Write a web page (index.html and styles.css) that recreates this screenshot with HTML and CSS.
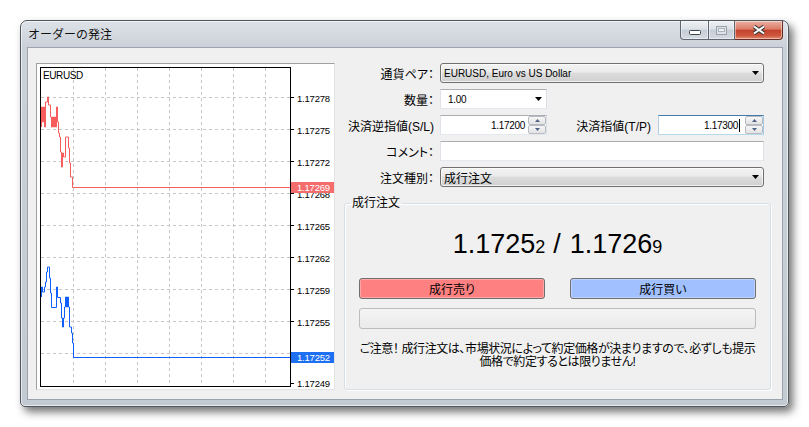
FILE: index.html
```html
<!DOCTYPE html>
<html lang="ja">
<head>
<meta charset="utf-8">
<title>オーダーの発注</title>
<link rel="stylesheet" href="styles.css">
</head>
<body>
<div class="window">
  <div class="titlebar">
    <div class="title">オーダーの発注</div>
    <div class="caption-buttons">
      <div class="cbtn min"><svg width="12" height="5" viewBox="0 0 12 5"><rect x="0.5" y="0.5" width="11" height="4" rx="1" fill="#fff" stroke="#3b4450"/></svg></div>
      <div class="cbtn max"><svg width="11" height="9" viewBox="0 0 11 9"><rect x="0.5" y="0.5" width="10" height="8" fill="#dfe3e8" stroke="#98a1ab"/><rect x="2.5" y="2.5" width="6" height="3" fill="#eef1f4" stroke="#a9b1ba"/></svg></div>
      <div class="cbtn close"><svg width="14" height="10" viewBox="0 0 14 10"><path d="M2 1.5L12 8.5M12 1.5L2 8.5" stroke="#3a3a3a" stroke-width="4"/><path d="M2 1.5L12 8.5M12 1.5L2 8.5" stroke="#fff" stroke-width="2"/></svg></div>
    </div>
  </div>
  <div class="client">
    <div class="chart">
      <svg class="chart-svg" width="297" height="325" viewBox="37 64 297 325">
        <g class="grid">
          <path d="M73.5 68V387M105.5 68V387M137.5 68V387M169.5 68V387M201.5 68V387M233.5 68V387M265.5 68V387"/>
          <path d="M41 97.5H290M41 129.5H290M41 161.5H290M41 193.5H290M41 225.5H290M41 257.5H290M41 289.5H290M41 321.5H290M41 353.5H290"/>
        </g>
        <path class="ticks" d="M290 97.5H294M290 129.5H294M290 161.5H294M290 193.5H294M290 225.5H294M290 257.5H294M290 289.5H294M290 321.5H294M290 353.5H294M290 383.5H294"/>
        <rect x="40.5" y="67.5" width="250" height="319" fill="none" stroke="#000"/>
        <text class="sym" x="43" y="78.5">EURUSD</text>
        <g class="axis">
          <text x="297" y="101.5">1.17278</text>
          <text x="297" y="133.5">1.17275</text>
          <text x="297" y="165.5">1.17272</text>
          <text x="297" y="197.5">1.17268</text>
          <text x="297" y="229.5">1.17265</text>
          <text x="297" y="261.5">1.17262</text>
          <text x="297" y="293.5">1.17259</text>
          <text x="297" y="325.5">1.17255</text>
          <text x="297" y="357.5">1.17252</text>
          <text x="297" y="386.5">1.17249</text>
        </g>
        <path class="ask" d="M41.5 127V107H42.5V122H43.5V107H44.5V127H45.5V102H47.5V97H48.5V105H50.5V117H51.5V127H52.5V117H53.5V127H54.5V117H55.5V127H56.5V107H57.5V122H58.5V133H59.5V137H60.5V152H61.5V167H62.5V153H63.5V157H65.5V137H68.5V148H69.5V163H70.5V177H72.5V187.5H290"/>
        <path class="bid" d="M41.5 297V287H42.5V292H44.5V287H45.5V282H46.5V272H47.5V267H49.5V278H50.5V293H51.5V307.5H56.5V287H57.5V297.5H60.5V303H61.5V318H62.5V327H63.5V318H64.5V307H65.5V297H66.5V307H67.5V297H68.5V307H69.5V327H71.5V333H72.5V343H73.5V357.5H290"/>
        <rect class="ask-tag" x="291" y="182" width="43" height="11"/>
        <text class="tag-text" x="297" y="191">1.17269</text>
        <rect class="bid-tag" x="291" y="352" width="43" height="11"/>
        <text class="tag-text" x="297" y="361">1.17252</text>
      </svg>
    </div>
    <div class="form">
      <div class="row">
        <div class="label">通貨ペア：</div>
        <div class="combo wide"><span class="ftext">EURUSD, Euro vs US Dollar</span><svg class="arrow" width="7" height="4" viewBox="0 0 7 4"><path d="M0 0H7L3.5 4z"/></svg></div>
      </div>
      <div class="row">
        <div class="label">数量：</div>
        <div class="dropedit"><span class="ftext num">1.00</span><svg class="arrow" width="7" height="4" viewBox="0 0 7 4"><path d="M0 0H7L3.5 4z"/></svg></div>
      </div>
      <div class="row">
        <div class="label">決済逆指値(S/L)</div>
        <div class="spin">
          <span class="ftext num value">1.17200</span>
          <div class="spin-btns">
            <div class="sb"><svg width="5" height="3" viewBox="0 0 5 3"><path d="M0 3H5L2.5 0z"/></svg></div>
            <div class="sb"><svg width="5" height="3" viewBox="0 0 5 3"><path d="M0 0H5L2.5 3z"/></svg></div>
          </div>
        </div>
        <div class="label2">決済指値(T/P)</div>
        <div class="spin focus">
          <span class="ftext num value">1.17300<span class="caret"></span></span>
          <div class="spin-btns">
            <div class="sb"><svg width="5" height="3" viewBox="0 0 5 3"><path d="M0 3H5L2.5 0z"/></svg></div>
            <div class="sb"><svg width="5" height="3" viewBox="0 0 5 3"><path d="M0 0H5L2.5 3z"/></svg></div>
          </div>
        </div>
      </div>
      <div class="row">
        <div class="label">コメント：</div>
        <div class="edit wide"></div>
      </div>
      <div class="row">
        <div class="label">注文種別：</div>
        <div class="combo wide"><span class="jp">成行注文</span><svg class="arrow" width="7" height="4" viewBox="0 0 7 4"><path d="M0 0H7L3.5 4z"/></svg></div>
      </div>
      <fieldset class="group">
        <legend>成行注文</legend>
        <div class="price">1.1725<span class="small">2</span><span class="slash">/</span>1.1726<span class="small">9</span></div>
        <div class="buttons">
          <div class="btn sell">成行売り</div>
          <div class="btn buy">成行買い</div>
        </div>
        <div class="progress"></div>
        <p class="notice">ご注意！ 成行注文は、市場状況によって約定価格が決まりますので、必ずしも提示<br>価格で約定するとは限りません!</p>
      </fieldset>
    </div>
  </div>
</div>
</body>
</html>
```
FILE: styles.css
```css
* { box-sizing: border-box; }
html, body { margin: 0; padding: 0; }
body {
  background: #fff;
  width: 809px;
  height: 427px;
  overflow: hidden;
  font-family: "Liberation Sans", "Noto Sans CJK JP", sans-serif;
  font-size: 12px;
  color: #000;
}

.window {
  margin: 20px 0 0 20px;
  width: 769px;
  height: 387px;
  border: 1px solid #4f5760;
  border-radius: 7px 7px 5px 5px;
  background: linear-gradient(#dde2e8, #cbd1d8 26px, #c3cad2);
  box-shadow: 4px 5px 8px rgba(0, 0, 0, 0.55), inset 0 0 0 1px rgba(255, 255, 255, 0.6);
  padding: 0 5px 6px 6px;
  display: flex;
  flex-direction: column;
}

.titlebar {
  height: 26px;
  flex: none;
  display: flex;
  justify-content: space-between;
  align-items: flex-start;
}
.title {
  font-family: "Noto Sans CJK JP", sans-serif;
  font-size: 12px;
  line-height: 26px;
  padding-left: 1px;
  color: #111;
}
.caption-buttons { display: flex; }
.cbtn {
  height: 19px;
  display: flex;
  align-items: center;
  justify-content: center;
  border: 1px solid #5d6672;
  border-top: none;
  background: linear-gradient(#eef1f4, #dce1e7 45%, #c6cdd6 50%, #d4dae1);
  box-shadow: inset 0 0 0 1px rgba(255, 255, 255, 0.45);
}
.cbtn.min { width: 29px; border-radius: 0 0 0 4px; }
.cbtn.min svg { margin-top: 4px; }
.cbtn.max { width: 26px; border-left: none; }
.cbtn.close {
  width: 48px;
  border-left: none;
  border-color: #6a2c22;
  border-radius: 0 0 4px 0;
  background: linear-gradient(#eab1a4, #dc7b66 45%, #c4432c 52%, #cd563c 80%, #e08a70);
}

.client {
  flex: 1;
  border: 1px solid #9aa3ad;
  background: #f0f0f0;
  display: flex;
  gap: 9px;
  padding: 15px 10px 9px 8px;
}

.chart {
  width: 299px;
  flex: none;
  border: 1px solid;
  border-color: #a0a0a0 #e3e3e3 #e3e3e3 #a0a0a0;
  background: #fff;
}
.chart-svg { display: block; }
.grid path { stroke: #c6c6c6; stroke-width: 1; stroke-dasharray: 3 3; fill: none; }
.ticks { stroke: #000; fill: none; }
.sym { font-family: "Liberation Sans", sans-serif; font-size: 10px; letter-spacing: -0.4px; fill: #000; }
.axis text, .tag-text { font-family: "Liberation Sans", sans-serif; font-size: 9.5px; letter-spacing: -0.2px; }
.axis text { fill: #000; }
.tag-text { fill: #fff; }
.ask { stroke: #f85d5d; fill: none; }
.bid { stroke: #1060ff; fill: none; }
.ask-tag { fill: #f46c6c; }
.bid-tag { fill: #1e6ff2; }

.form {
  flex: none;
  width: 427px;
  min-width: 0;
  display: flex;
  flex-direction: column;
}
.row {
  display: flex;
  align-items: center;
  height: 20px;
  margin-bottom: 6px;
}
.label, .label2 {
  text-align: right;
  font-feature-settings: "palt";
  white-space: nowrap;
}
.label { width: 90px; margin-right: 6px; }
.label2 { width: 104px; margin-right: 7px; }

.ftext { font-family: "Liberation Sans", sans-serif; font-size: 10px; }
.num { letter-spacing: -0.3px; }
.jp { font-size: 12px; font-feature-settings: "palt"; }
.arrow { display: block; fill: #000; }

.wide { width: 324px; }
.combo {
  height: 20px;
  border: 1px solid #707070;
  border-radius: 3px;
  background: linear-gradient(#f3f3f3, #ebebeb 45%, #dddddd 50%, #cfcfcf);
  box-shadow: inset 0 0 0 1px rgba(255, 255, 255, 0.7);
  display: flex;
  align-items: center;
  justify-content: space-between;
  padding: 0 4px 0 3px;
}
.dropedit, .spin, .edit {
  height: 20px;
  background: #fff;
  border: 1px solid;
  border-color: #abadb3 #dbdfe6 #e3e9ef #e2e3ea;
}
.dropedit {
  width: 107px;
  display: flex;
  align-items: center;
  justify-content: space-between;
  padding: 0 4px 0 7px;
}
.spin {
  width: 107px;
  display: flex;
  align-items: center;
  justify-content: flex-end;
}
.spin + .label2 + .spin { width: 106px; }
.spin.focus { border-color: #3d7bad #a4c9e3 #b7d9ed #b5cfe7; }
.value {
  flex: 1;
  text-align: right;
  padding-right: 3px;
  white-space: nowrap;
}
.focus .value { padding-right: 5px; }
.caret {
  display: inline-block;
  width: 1px;
  height: 13px;
  background: #000;
  vertical-align: -3px;
  margin-left: 1px;
}
.spin-btns {
  width: 18px;
  height: 18px;
  display: flex;
  flex-direction: column;
}
.sb {
  flex: 1;
  display: flex;
  align-items: center;
  justify-content: center;
  border: 1px solid #b8bcc2;
  border-radius: 2px;
  background: linear-gradient(#f6f6f6, #e3e3e3);
}
.sb svg { display: block; fill: #4e6287; }

.group {
  flex: 1;
  margin: 3px 0 0 0;
  padding: 0 14px;
  min-width: 0;
  width: 427px;
  border: 1px solid #d5dfe5;
  border-radius: 3px;
  box-shadow: inset 1px 1px 0 #fff, 1px 1px 0 #fff;
}
.group legend {
  padding: 0 2px;
  margin-left: -9px;
  line-height: 14px;
  font-size: 12px;
  font-feature-settings: "palt";
}
.price {
  margin-top: 18px;
  height: 32px;
  line-height: 32px;
  text-align: center;
  font-family: "Liberation Sans", sans-serif;
  font-size: 27px;
  color: #000;
  white-space: nowrap;
}
.price .small { font-size: 18px; }
.price .slash { margin: 0 9px 0 8px; }
.buttons {
  margin-top: 18px;
  display: flex;
  justify-content: space-between;
}
.btn {
  width: 186px;
  height: 21px;
  border: 1px solid #707070;
  border-radius: 3px;
  box-shadow: inset 0 0 0 1px rgba(255, 255, 255, 0.3);
  display: flex;
  align-items: center;
  justify-content: center;
  font-size: 12px;
  font-feature-settings: "palt";
}
.sell { background: #ff8080; }
.buy { background: #a0c0ff; }
.progress {
  margin-top: 9px;
  height: 21px;
  border: 1px solid #bcbcbc;
  border-radius: 3px;
  background: linear-gradient(#f4f4f4, #ebebeb);
}
.notice {
  margin: 14px 0 0 0;
  line-height: 13px;
  font-size: 12px;
  letter-spacing: -0.4px;
  text-align: center;
  white-space: nowrap;
  font-feature-settings: "palt";
}
```
